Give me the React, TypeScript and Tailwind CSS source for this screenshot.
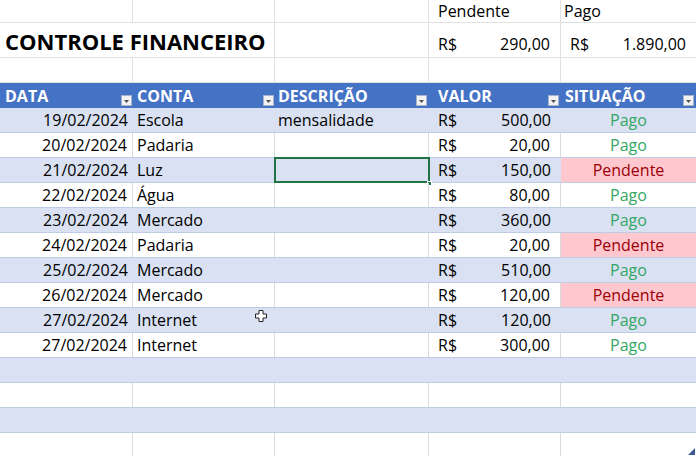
import React from "react";

const GRID = "grid grid-cols-[133px_142px_154px_132px_135px]";

type Row = [string, string, string, string, string];

const data: Row[] = [
  ["19/02/2024", "Escola", "mensalidade", "500,00", "Pago"],
  ["20/02/2024", "Padaria", "", "20,00", "Pago"],
  ["21/02/2024", "Luz", "", "150,00", "Pendente"],
  ["22/02/2024", "Água", "", "80,00", "Pago"],
  ["23/02/2024", "Mercado", "", "360,00", "Pago"],
  ["24/02/2024", "Padaria", "", "20,00", "Pendente"],
  ["25/02/2024", "Mercado", "", "510,00", "Pago"],
  ["26/02/2024", "Mercado", "", "120,00", "Pendente"],
  ["27/02/2024", "Internet", "", "120,00", "Pago"],
  ["27/02/2024", "Internet", "", "300,00", "Pago"],
  ["", "", "", "", ""],
  ["", "", "", "", ""],
  ["", "", "", "", ""],
  ["", "", "", "", ""],
];

function FilterBtn({ right }: { right: string }) {
  return (
    <span
      className={`absolute bottom-[2px] ${right} w-[11px] h-[11px] bg-[#f2f2f2] border border-[#a8b4cc] flex items-center justify-center`}
    >
      <svg width="5" height="3" viewBox="0 0 5 3" className="mt-[2px]">
        <path d="M0 0H5L2.5 3Z" fill="#505050" />
      </svg>
    </span>
  );
}

export default function App() {
  return (
    <div
      className="relative w-[696px] h-[456px] overflow-hidden bg-white text-black text-[16px]"
      style={{ fontFamily: "'Open Sans', Lato, sans-serif" }}
    >
      {/* Row 1 */}
      <div className={`${GRID} h-[23px]`}>
        <div className="border-r border-b border-[#e1e1e1]" />
        <div className="border-r border-b border-[#e1e1e1]" />
        <div className="border-r border-b border-[#e1e1e1]" />
        <div className="border-r border-b border-[#e1e1e1] flex items-center pl-[9px] leading-none">Pendente</div>
        <div className="border-b border-[#e1e1e1] flex items-center pl-[3px] leading-none">Pago</div>
      </div>
      {/* Row 2 */}
      <div className={`${GRID} h-[35px]`}>
        <div className="col-span-2 border-r border-b border-[#e1e1e1] flex items-end pl-[5px] pb-[2px]">
          <span className="font-bold text-[22px] leading-[28px] whitespace-nowrap">CONTROLE FINANCEIRO</span>
        </div>
        <div className="border-r border-b border-[#e1e1e1]" />
        <div className="border-r border-b border-[#e1e1e1] flex items-end justify-between pl-[9px] pr-[10px] pb-[2px] leading-[22px]">
          <span>R$</span>
          <span>290,00</span>
        </div>
        <div className="border-b border-[#e1e1e1] flex items-end justify-between pl-[9px] pr-[10px] pb-[2px] leading-[22px]">
          <span>R$</span>
          <span>1.890,00</span>
        </div>
      </div>
      {/* Row 3 */}
      <div className={`${GRID} h-[25px]`}>
        <div className="border-r border-b border-[#e1e1e1]" />
        <div className="border-r border-b border-[#e1e1e1]" />
        <div className="border-r border-b border-[#e1e1e1]" />
        <div className="border-r border-b border-[#e1e1e1]" />
        <div className="border-b border-[#e1e1e1]" />
      </div>
      {/* Header */}
      <div className={`${GRID} h-[25px] bg-[#4472c4] text-white font-bold`}>
        <div className="relative flex items-center pl-[5px]">
          DATA
          <FilterBtn right="right-[1px]" />
        </div>
        <div className="relative flex items-center pl-[4px]">
          CONTA
          <FilterBtn right="right-[1px]" />
        </div>
        <div className="relative flex items-center pl-[3px]">
          DESCRIÇÃO
          <FilterBtn right="right-[2px]" />
        </div>
        <div className="relative flex items-center pl-[9px]">
          VALOR
          <FilterBtn right="right-[2px]" />
        </div>
        <div className="relative flex items-center pl-[4px]">
          SITUAÇÃO
          <FilterBtn right="right-[2px]" />
        </div>
      </div>
      {/* Data rows */}
      {data.map((r, i) => {
        const band = i % 2 === 0;
        const vline = band ? "" : "border-r border-r-[#dadada]";
        return (
          <div
            key={i}
            className={`${GRID} h-[25px] border-b border-b-[#bfcce6] ${band ? "bg-[#d9e1f2]" : "bg-white"}`}
          >
            <div className={`${vline} flex items-center justify-end pr-[5px]`}>{r[0]}</div>
            <div className={`${vline} flex items-center pl-[4px]`}>{r[1]}</div>
            <div className={`${vline} relative flex items-center pl-[3px]`}>
              {r[2]}
              {i === 2 && (
                <>
                  <span className="absolute left-[-1px] top-[-1px] right-[-1px] bottom-[-1px] border-2 border-[#217346]" />
                  <span className="absolute right-[-3px] bottom-[-4px] w-[5px] h-[5px] bg-[#217346] border border-white" />
                </>
              )}
            </div>
            <div className={`${vline} flex items-center justify-between pl-[9px] pr-[10px]`}>
              {r[3] && (
                <>
                  <span>R$</span>
                  <span>{r[3]}</span>
                </>
              )}
            </div>
            <div
              className={`flex items-center justify-center ${
                r[4] === "Pendente" ? "bg-[#ffc7ce] text-[#9c0006]" : "text-[#33a864]"
              }`}
            >
              {r[4]}
            </div>
          </div>
        );
      })}

      {/* Mouse cursor (fat cross) */}
      <svg className="absolute left-[255px] top-[310px]" width="12" height="12" viewBox="0 0 12 12">
        <path
          d="M4 0.5H8V4H11.5V8H8V11.5H4V8H0.5V4H4Z"
          fill="#ffffff"
          stroke="#222"
          strokeWidth="1"
        />
      </svg>

      {/* Table resize handle */}
      <svg className="absolute right-[1px] bottom-[1px]" width="7" height="7" viewBox="0 0 7 7">
        <path d="M7 0V7H0Z" fill="#3b5a94" />
      </svg>
    </div>
  );
}
